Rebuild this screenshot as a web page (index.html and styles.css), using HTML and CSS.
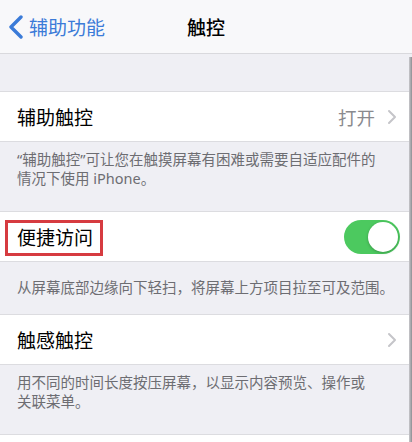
FILE: index.html
```html
<!DOCTYPE html>
<html lang="zh-CN">
<head>
<meta charset="utf-8">
<link rel="stylesheet" href="styles.css">
</head>
<body>
<div class="page">
  <header class="nav">
    <div class="back">
      <svg class="back-icon" width="16" height="24" viewBox="0 0 16 24"><polyline points="13,2 3,12 13,22" fill="none" stroke="#3b7bd8" stroke-width="3.4" stroke-linecap="round" stroke-linejoin="round"/></svg>
      <span class="back-text">辅助功能</span>
    </div>
    <div class="title">触控</div>
  </header>
  <div class="gap"></div>

  <div class="row">
    <span class="row-title">辅助触控</span>
    <span class="row-right"><span class="value">打开</span>
      <svg class="chev" width="10" height="16" viewBox="0 0 10 16"><polyline points="2,2 8,8 2,14" fill="none" stroke="#c5c5c9" stroke-width="2" stroke-linecap="round" stroke-linejoin="round"/></svg>
    </span>
  </div>
  <div class="footer f1"><span class="line">“辅助触控”可让您在触摸屏幕有困难或需要自适应配件的</span><span class="line">情况下使用 iPhone。</span></div>

  <div class="row">
    <span class="row-title highlighted">便捷访问</span>
    <span class="toggle"><span class="knob"></span></span>
  </div>
  <div class="footer f2"><span class="line">从屏幕底部边缘向下轻扫，将屏幕上方项目拉至可及范围。</span></div>

  <div class="row">
    <span class="row-title">触感触控</span>
    <span class="row-right">
      <svg class="chev" width="10" height="16" viewBox="0 0 10 16"><polyline points="2,2 8,8 2,14" fill="none" stroke="#c5c5c9" stroke-width="2" stroke-linecap="round" stroke-linejoin="round"/></svg>
    </span>
  </div>
  <div class="footer f3"><span class="line">用不同的时间长度按压屏幕，以显示内容预览、操作或</span><span class="line">关联菜单。</span></div>
  <div class="row empty"></div>

  <div class="scroll-edge"></div>
</div>
</body>
</html>
```
FILE: styles.css
```css
* { box-sizing: border-box; }
html, body { margin: 0; padding: 0; }
body {
  width: 412px;
  height: 442px;
  overflow: hidden;
  background: #efeff4;
  font-family: "Noto Sans CJK SC", "Noto Sans", sans-serif;
}
.page { position: relative; width: 412px; height: 442px; overflow: hidden; }
.nav {
  height: 54px;
  background: #f8f8fa;
  border-bottom: 1px solid #d9d9dd;
  display: flex;
  align-items: center;
  position: relative;
}
.back {
  display: flex;
  align-items: center;
  padding-left: 8px;
  gap: 5px;
  color: #3b7bd8;
}
.back-text { font-size: 19px; line-height: 24px; }
.title {
  position: absolute;
  left: 0; right: 0;
  text-align: center;
  font-size: 19px;
  font-weight: 500;
  color: #000;
  pointer-events: none;
}
.gap { height: 38px; border-bottom: 1px solid #dcdce0; }
.row {
  height: 50px;
  background: #fff;
  border-bottom: 1px solid #dcdce0;
  display: flex;
  align-items: center;
  justify-content: space-between;
  padding: 0 14px 0 17px;
}
.row-title { font-size: 19px; color: #000; line-height: 26px; }
.highlighted {
  position: relative;
}
.highlighted::before {
  content: "";
  position: absolute;
  left: -12px; right: -10px;
  top: -4px; bottom: -6px;
  border: 3px solid #d63b40;
}
.row-right { display: flex; align-items: center; gap: 12px; }
.value { font-size: 18.5px; color: #8a8a8e; }
.chev { display: block; margin-right: 1px; }
.toggle {
  width: 56px; height: 34px;
  border-radius: 17px;
  background: #4cc95f;
  position: relative;
  margin-right: -2px;
}
.knob {
  position: absolute;
  right: 2px; top: 2px;
  width: 30px; height: 30px;
  border-radius: 50%;
  background: #fff;
  box-shadow: 0 1px 3px rgba(0,0,0,0.25);
}
.footer {
  font-family: "Noto Sans", "Noto Sans CJK SC", sans-serif;
  font-size: 14.5px;
  line-height: 19px;
  color: #6d6d72;
  padding: 0 4px 0 17px;
  border-bottom: 1px solid #dcdce0;
}
.line { display: block; white-space: nowrap; }
.f1 { padding-top: 8px; padding-bottom: 23px; }
.f2 { padding-top: 16px; padding-bottom: 17px; }
.f3 { padding-top: 8px; padding-bottom: 23px; }
.empty { border-bottom: none; }
.scroll-edge {
  position: absolute;
  right: 0; top: 57px; bottom: 0;
  width: 3px;
  background: linear-gradient(to right, #c8c8cc, #8e8e92);
}
```
